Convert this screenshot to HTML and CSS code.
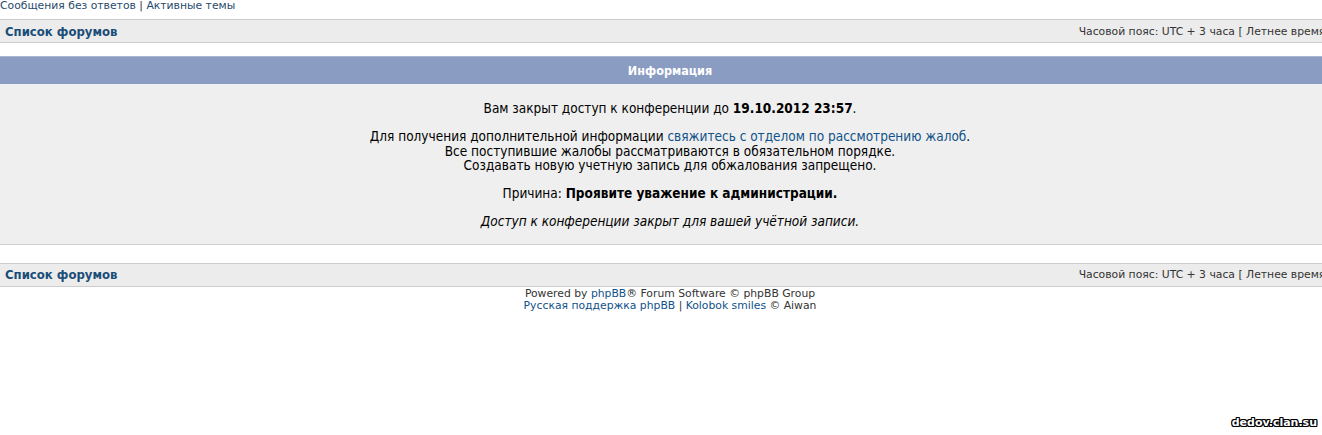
FILE: index.html
```html
<!DOCTYPE html>
<html lang="ru">
<head>
<meta charset="utf-8">
<title>Информация</title>
<link rel="stylesheet" href="styles.css">
</head>
<body>
<div class="page">
  <div class="toplinks"><a href="#">Сообщения без ответов</a> | <a href="#">Активные темы</a></div>
  <div class="navbar">
    <a class="navlink" href="#">Список форумов</a>
    <span class="tz">Часовой пояс: UTC + 3 часа [ Летнее время ]</span>
  </div>
  <div class="infobox">
    <div class="infohead">Информация</div>
    <div class="infobody">
      <p>Вам закрыт доступ к конференции до <b>19.10.2012 23:57</b>.</p>
      <p>Для получения дополнительной информации <a href="#">свяжитесь с отделом по рассмотрению жалоб</a>.<br>Все поступившие жалобы рассматриваются в обязательном порядке.<br>Создавать новую учетную запись для обжалования запрещено.</p>
      <p>Причина: <b>Проявите уважение к администрации.</b></p>
      <p><i>Доступ к конференции закрыт для вашей учётной записи.</i></p>
    </div>
  </div>
  <div class="navbar navbar2">
    <a class="navlink" href="#">Список форумов</a>
    <span class="tz">Часовой пояс: UTC + 3 часа [ Летнее время ]</span>
  </div>
  <div class="footer">
    Powered by <a href="#">phpBB</a>® Forum Software © phpBB Group<br>
    <a href="#">Русская поддержка phpBB</a> | <a href="#">Kolobok smiles</a> © Aiwan
  </div>
</div>
<div class="watermark">dedov.clan.su</div>
</body>
</html>
```

FILE: styles.css
```css
html, body {
  margin: 0;
  padding: 0;
  background: #fff;
  overflow: hidden;
}
body {
  width: 1322px;
  height: 435px;
  position: relative;
}
.page {
  width: 1340px;
  font-family: "DejaVu Sans", Verdana, sans-serif;
  font-size: 10.8px;
  color: #333;
}
a {
  color: #105289;
  text-decoration: none;
}
.toplinks {
  height: 13px;
  line-height: 12px;
  color: #333;
}
.toplinks a {
  color: #274b6d;
}
.navbar {
  margin-top: 6px;
  height: 22px;
  background: #ececec;
  border-top: 1px solid #cdcdcd;
  border-bottom: 1px solid #cdcdcd;
  display: flex;
  justify-content: space-between;
  align-items: center;
  padding: 0 7px 0 5px;
}
.navbar2 {
  margin-top: 18px;
}
.navlink {
  font-family: "DejaVu Sans Condensed", "DejaVu Sans", sans-serif;
  font-weight: bold;
  font-size: 13px;
  color: #1a4d78;
}
.tz {
  white-space: nowrap;
  color: #333;
}
.infobox {
  margin-top: 13px;
  background: #efefef;
  border-bottom: 1px solid #d0d0d0;
}
.infohead {
  height: 27px;
  background: #8a9cc2;
  border-top: 1px solid #a9b6d2;
  color: #fff;
  font-family: "DejaVu Sans Condensed", "DejaVu Sans", sans-serif;
  font-weight: bold;
  font-size: 12.5px;
  display: flex;
  align-items: center;
  justify-content: center;
}
.infobody {
  padding: 17px 0 15px;
  text-align: center;
  font-family: "DejaVu Sans Condensed", "DejaVu Sans", sans-serif;
  font-size: 13.5px;
  line-height: 14.3px;
  color: #000;
}
.infobody p {
  margin: 0 0 14px;
}
.infobody p:last-child {
  margin-bottom: 0;
}
.footer {
  text-align: center;
  padding-top: 1px;
  line-height: 12px;
  color: #333;
}
.watermark {
  position: absolute;
  right: 5px;
  bottom: 6px;
  font-family: "DejaVu Sans", Verdana, sans-serif;
  font-weight: bold;
  font-size: 11px;
  color: #fff;
  text-shadow: -1px -1px 0 #000, 1px -1px 0 #000, -1px 1px 0 #000, 1px 1px 0 #000, 0 1px 0 #000, 0 -1px 0 #000, 1px 0 0 #000, -1px 0 0 #000;
}
```
